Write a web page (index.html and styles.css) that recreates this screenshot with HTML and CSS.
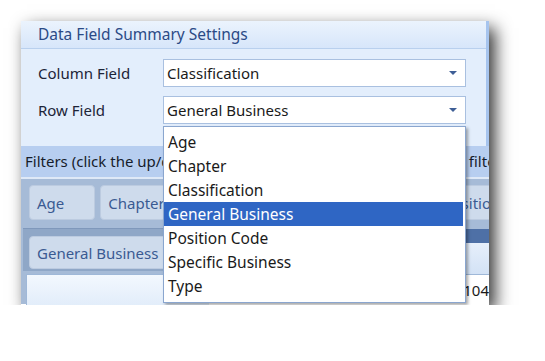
FILE: index.html
```html
<!DOCTYPE html>
<html lang="en">
<head>
    <meta charset="UTF-8" />
    <title>Data Field Summary Settings</title>
    <link rel="stylesheet" href="styles.css">
</head>
<body>
    <div class="window">
        <section class="settings">
            <div class="settings-title">Data Field Summary Settings</div>
            <div class="settings-body">
                <div class="field-row">
                    <span class="field-label">Column Field</span>
                    <div class="combo"><span>Classification</span><i class="arrow"></i></div>
                </div>
                <div class="field-row">
                    <span class="field-label">Row Field</span>
                    <div class="combo"><span>General Business</span><i class="arrow"></i></div>
                </div>
            </div>
        </section>

        <div class="filters-bar">Filters (click the up/down arrow to sort, or the funnel button to filter)</div>

        <div class="filter-area">
            <div class="filter-fields">
                <span class="field-btn">Age</span>
                <span class="field-btn">Chapter</span>
                <span class="field-btn">Specific Business</span>
                <span class="field-btn">Type</span>
                <span class="field-btn">Position Code</span>
            </div>
            <div class="grid">
                <div class="row-side">
                    <div class="row-fields"><span class="field-btn">General Business</span></div>
                    <div class="row-cell"></div>
                </div>
                <div class="col-side">
                    <div class="col-fields"></div>
                    <div class="col-header"></div>
                    <div class="data-cell">104</div>
                </div>
            </div>
        </div>

        <ul class="dropdown">
            <li>Age</li>
            <li>Chapter</li>
            <li>Classification</li>
            <li class="selected">General Business</li>
            <li>Position Code</li>
            <li>Specific Business</li>
            <li>Type</li>
        </ul>
    </div>
</body>
</html>
```

FILE: styles.css
```css
body { margin: 0; background: #fff; font-family: "Noto Sans", "Open Sans", sans-serif; font-size: 15px; }

.window { position: relative; margin: 21px 0 0 21px; width: 468px; height: 284px; overflow: hidden; box-shadow: 6px 7px 16px rgba(0,0,0,0.8); }

.settings { border-right: 3px solid #a6c4ee; }
.settings-title { height: 27px; line-height: 27px; padding-left: 17px; font-size: 15.5px; color: #2b4a86; background: linear-gradient(#ebf3fd, #d7e6fa); border-bottom: 1px solid #b9d0ee; }
.settings-body { background: #e3eefc; padding: 10px 20px 22px 17px; display: flex; flex-direction: column; gap: 9px; }
.field-row { display: flex; align-items: center; }
.field-label { width: 125px; color: #1c2438; }
.combo { flex: 1; height: 28px; box-sizing: border-box; border: 1px solid #a9c0e0; background: #fff; display: flex; align-items: center; justify-content: space-between; padding: 0 8px 0 3px; color: #1a1a1a; }
.arrow { width: 0; height: 0; border-left: 4px solid transparent; border-right: 4px solid transparent; border-top: 4px solid #3e5e96; }

.filters-bar { height: 31px; line-height: 31px; padding-left: 4px; background: #b7cef0; color: #161c2b; white-space: nowrap; }

.filter-area { height: 125px; background: #a6bbd7; border-top: 2px solid #dfe9f7; }
.filter-fields { display: flex; gap: 5px; padding: 6px 0 0 8px; height: 35px; white-space: nowrap; }
.field-btn { display: inline-flex; align-items: center; padding: 0 28px 0 7px; background: #cedbec; border: 1px solid #bccbe0; border-radius: 4px; color: #3a5a92; }
.filter-fields .field-btn { height: 33px; }
.filter-fields .field-btn:first-child { padding-right: 30px; }

.grid { display: flex; margin-top: 8px; }
.row-side { width: 200px; margin-left: 2px; }
.row-fields { height: 43px; box-sizing: border-box; padding: 7px 0 0 6px; background: #8fa7c7; border-top: 1px solid #7f98bb; }
.row-fields .field-btn { height: 33px; box-sizing: border-box; padding-right: 10px; }
.row-cell { height: 30px; margin: 3px 0 0 3px; background: linear-gradient(#f3f8fe, #e2edfa); border-top: 1px solid #9fb8d8; border-left: 1px solid #9fb8d8; }
.col-side { flex: 1; }
.col-fields { height: 14px; margin-top: 1px; background: #4e70a6; }
.col-header { height: 31px; background: linear-gradient(#e6effb, #d3e2f5); border-bottom: 1px solid #9fb8d8; }
.data-cell { height: 30px; line-height: 30px; background: #fff; padding-left: 254px; color: #1a1a1a; }

.dropdown { position: absolute; left: 142px; top: 105px; width: 303px; height: 177px; box-sizing: border-box; margin: 0; padding: 3px 0 0 0; list-style: none; background: #fff; border: 1px solid #8aa6cf; box-shadow: 2px 2px 3px rgba(0,0,0,0.35); font-size: 15.5px; }
.dropdown li { height: 24px; line-height: 24px; padding-left: 4px; margin-right: 2px; color: #1a1a1a; }
.dropdown li.selected { background: #2f66c4; color: #fff; }
```
